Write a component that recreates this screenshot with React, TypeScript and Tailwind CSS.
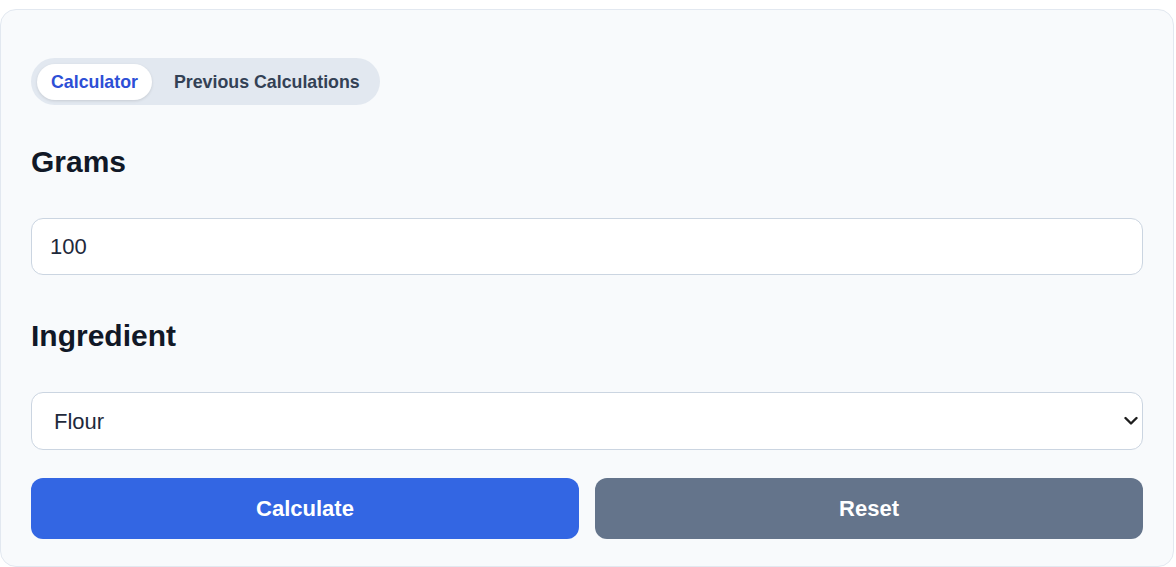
import React, { useState } from "react";

export default function App() {
  const [tab, setTab] = useState("calc");
  const [grams, setGrams] = useState("100");
  const [ing, setIng] = useState("Flour");
  return (
    <div className="min-h-[567px] bg-white pt-[9px]" style={{ fontFamily: '"Liberation Sans", Arial, sans-serif' }}>
      <div className="w-[1174px] rounded-2xl border border-[#e2e8f0] bg-[#f8fafc] px-[30px] pt-[48px] pb-[27px]">
        <div className="inline-flex h-[47px] items-center gap-2 rounded-full bg-[#e2e8f0] px-1.5">
          <button
            onClick={() => setTab("calc")}
            className={
              tab === "calc"
                ? "rounded-full bg-white px-3.5 py-1 text-[17.8px] leading-7 font-bold text-[#2d4fd6] shadow-[0_1px_3px_rgba(0,0,0,0.12)]"
                : "rounded-full px-3.5 py-1 text-[17.8px] leading-7 font-bold text-[#334155]"
            }
          >
            Calculator
          </button>
          <button
            onClick={() => setTab("prev")}
            className={
              tab === "prev"
                ? "rounded-full bg-white px-3.5 py-1 text-[17.8px] leading-7 font-bold text-[#2d4fd6] shadow-[0_1px_3px_rgba(0,0,0,0.12)]"
                : "rounded-full px-3.5 py-1 text-[17.8px] leading-7 font-bold text-[#334155]"
            }
          >
            Previous Calculations
          </button>
        </div>

        <h2 className="mt-[39px] text-3xl leading-9 font-bold text-[#111827]">Grams</h2>
        <input
          value={grams}
          onChange={(e) => setGrams(e.target.value)}
          className="mt-[38px] block h-[57px] w-full rounded-xl border border-[#cbd5e1] bg-white px-[18px] text-[22px] text-[#1e293b] outline-none"
        />

        <h2 className="mt-[43px] text-3xl leading-9 font-bold text-[#111827]">Ingredient</h2>
        <div className="relative mt-[38px]">
          <select
            value={ing}
            onChange={(e) => setIng(e.target.value)}
            className="block h-[58px] w-full appearance-none rounded-xl border border-[#cbd5e1] bg-white pl-[22px] pr-10 text-[22px] text-[#1e293b] outline-none"
          >
            <option>Flour</option>
            <option>Sugar</option>
            <option>Butter</option>
            <option>Milk</option>
          </select>
          <svg
            className="pointer-events-none absolute right-[5px] top-1/2 -translate-y-1/2"
            width="14"
            height="9"
            viewBox="0 0 14 9"
            fill="none"
          >
            <path d="M1.5 1.5 L7 7 L12.5 1.5" stroke="#1e1e1e" strokeWidth="2.4" strokeLinecap="round" strokeLinejoin="round" />
          </svg>
        </div>

        <div className="mt-[28px] grid grid-cols-2 gap-4">
          <button className="h-[61px] rounded-xl bg-[#3366e3] text-[22px] font-bold text-white">Calculate</button>
          <button className="h-[61px] rounded-xl bg-[#64748b] text-[22px] font-bold text-white">Reset</button>
        </div>
      </div>
    </div>
  );
}
